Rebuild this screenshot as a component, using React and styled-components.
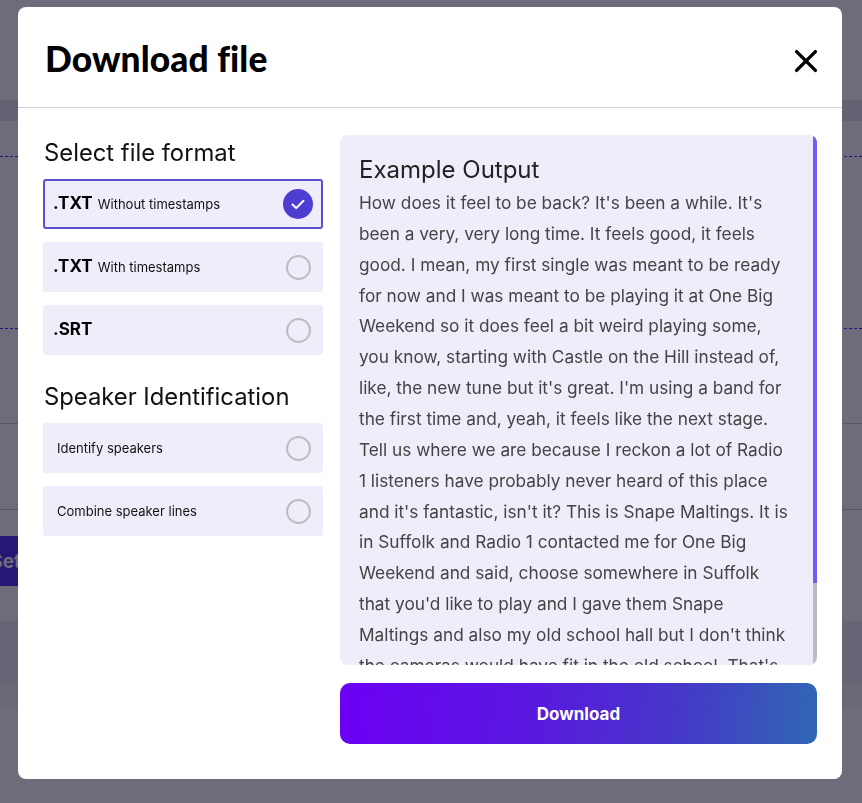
import styled, { createGlobalStyle } from "styled-components";
import { useState } from "react";

const GlobalStyle = createGlobalStyle`
  html, body {
    margin: 0;
    padding: 0;
  }
  body {
    font-family: Inter, "Noto Sans", sans-serif;
    background: #ffffff;
    overflow: hidden;
  }
`;

const transcriptLines = [
  "How does it feel to be back? It's been a while. It's",
  "been a very, very long time. It feels good, it feels",
  "good. I mean, my first single was meant to be ready",
  "for now and I was meant to be playing it at One Big",
  "Weekend so it does feel a bit weird playing some,",
  "you know, starting with Castle on the Hill instead of,",
  "like, the new tune but it's great. I'm using a band for",
  "the first time and, yeah, it feels like the next stage.",
  "Tell us where we are because I reckon a lot of Radio",
  "1 listeners have probably never heard of this place",
  "and it's fantastic, isn't it? This is Snape Maltings. It is",
  "in Suffolk and Radio 1 contacted me for One Big",
  "Weekend and said, choose somewhere in Suffolk",
  "that you'd like to play and I gave them Snape",
  "Maltings and also my old school hall but I don't think",
  "the cameras would have fit in the old school. That's",
  "why we ended up here, and it's a really special place",
  "for me, so it's great to be back home playing again.",
];

const formats = [
  { id: "txt", ext: ".TXT", note: "Without timestamps" },
  { id: "txt-ts", ext: ".TXT", note: "With timestamps" },
  { id: "srt", ext: ".SRT", note: "" },
];

const speakerOptions = [
  { id: "identify", label: "Identify speakers" },
  { id: "combine", label: "Combine speaker lines" },
];

const CheckIcon = () => (
  <svg width="30" height="30" viewBox="0 0 30 30">
    <circle cx="15" cy="15" r="15" fill="#4d3dd0" />
    <path
      d="M9.5 15.5l3.7 3.6 7.3-7.4"
      fill="none"
      stroke="#fff"
      strokeWidth="2"
      strokeLinecap="round"
      strokeLinejoin="round"
    />
  </svg>
);

const CloseIcon = () => (
  <svg width="24" height="24" viewBox="0 0 24 24">
    <path
      d="M2.6 2.6l18.8 18.8M21.4 2.6L2.6 21.4"
      stroke="#000"
      strokeWidth="3.4"
      strokeLinecap="round"
    />
  </svg>
);

const App = () => {
  const [format, setFormat] = useState("txt");
  const [speakers, setSpeakers] = useState({ identify: false, combine: false });

  const toggleSpeaker = (id) => {
    setSpeakers({ ...speakers, [id]: !speakers[id] });
  };

  return (
    <>
      <GlobalStyle />
      {/* the page that sits behind the dialog */}
      <BehindPage>
        <BehindBand $h={100} />
        <BehindBand $h={21} $bg="#e6e6ea" />
        <BehindBand $h={35} />
        <BehindLine $dashed />
        <BehindBand $h={171} />
        <BehindLine $dashed />
        <BehindBand $h={94} />
        <BehindLine $color="#c9c9d0" />
        <BehindBand $h={85} />
        <BehindLine $color="#c9c9d0" />
        <BehindBand $h={26} />
        <BehindButton>Set</BehindButton>
        <BehindBand $h={35} />
        <BehindBand $h={62} $bg="#ececef" />
        <BehindBand $h={25} $bg="#f7f7f8" />
      </BehindPage>

      <Overlay>
        <Modal>
          <Header>
            <Title>Download file</Title>
            <CloseButton aria-label="Close">
              <CloseIcon />
            </CloseButton>
          </Header>

          <Body>
            <LeftColumn>
              <SectionTitle>Select file format</SectionTitle>
              <OptionList>
                {formats.map((f) => (
                  <Option
                    key={f.id}
                    $selected={format === f.id}
                    onClick={() => setFormat(f.id)}
                  >
                    <Label>
                      <Ext>{f.ext}</Ext>
                      {f.note && <Note>{f.note}</Note>}
                    </Label>
                    <RadioSlot>
                      {format === f.id ? <CheckIcon /> : <EmptyRadio />}
                    </RadioSlot>
                  </Option>
                ))}
              </OptionList>

              <SectionTitle $spaced>Speaker Identification</SectionTitle>
              <OptionList>
                {speakerOptions.map((s) => (
                  <Option
                    key={s.id}
                    $selected={false}
                    $padLeft={12}
                    onClick={() => toggleSpeaker(s.id)}
                  >
                    <PlainLabel>{s.label}</PlainLabel>
                    <RadioSlot>
                      {speakers[s.id] ? <CheckIcon /> : <EmptyRadio />}
                    </RadioSlot>
                  </Option>
                ))}
              </OptionList>
            </LeftColumn>

            <RightColumn>
              <Preview>
                <PreviewScroll>
                  <PreviewTitle>Example Output</PreviewTitle>
                  <PreviewText>
                    {transcriptLines.map((line, i) => (
                      <span key={i}>
                        {line}
                        <br />
                      </span>
                    ))}
                  </PreviewText>
                </PreviewScroll>
                <ScrollTrack>
                  <ScrollThumb $h={448} />
                </ScrollTrack>
              </Preview>
              <DownloadButton>Download</DownloadButton>
            </RightColumn>
          </Body>
        </Modal>
      </Overlay>
    </>
  );
};

const BehindPage = styled.div`
  height: 803px;
  display: flex;
  flex-direction: column;
  overflow: hidden;
`;

const BehindBand = styled.div`
  height: ${(p) => p.$h}px;
  background: ${(p) => p.$bg || "#ffffff"};
`;

const BehindLine = styled.div`
  height: 0;
  border-top: 1px ${(p) => (p.$dashed ? "dashed" : "solid")}
    ${(p) => p.$color || "#4b2af0"};
`;

const BehindButton = styled.div`
  width: 45px;
  height: 50px;
  margin-left: -24px;
  background: #4b2af0;
  color: #ffffff;
  font-size: 19px;
  font-weight: 700;
  display: flex;
  align-items: center;
  justify-content: flex-end;
`;

const Overlay = styled.div`
  position: fixed;
  inset: 0;
  background: rgba(13, 10, 35, 0.6);
  display: flex;
  justify-content: flex-start;
  align-items: flex-start;
  padding: 7px 0 0 18px;
`;

const Modal = styled.div`
  width: 824px;
  height: 772px;
  background: #ffffff;
  border-radius: 8px;
  display: flex;
  flex-direction: column;
  box-sizing: border-box;
`;

const Header = styled.header`
  height: 101px;
  box-sizing: border-box;
  border-bottom: 1px solid #d3d1dc;
  display: flex;
  align-items: center;
  justify-content: space-between;
  padding: 0 24px 0 27px;
`;

const Title = styled.h1`
  margin: 0;
  font-family: Lato, "Noto Sans", sans-serif;
  font-weight: 900;
  font-size: 35.3px;
  color: #000000;
  letter-spacing: 0.1px;
  padding-top: 2px;
`;

const CloseButton = styled.button`
  border: none;
  background: none;
  padding: 0;
  margin-top: 8px;
  display: flex;
  cursor: pointer;
`;

const Body = styled.div`
  display: grid;
  grid-template-columns: 280px 477px;
  column-gap: 17px;
  padding: 27px 25px 35px;
`;

const LeftColumn = styled.div`
  display: flex;
  flex-direction: column;
`;

const SectionTitle = styled.h2`
  margin: ${(p) => (p.$spaced ? "24px" : "0")} 0 8px;
  font-size: 23.8px;
  font-weight: 400;
  line-height: 36px;
  color: #111111;
  padding-left: 1px;
`;

const OptionList = styled.div`
  display: flex;
  flex-direction: column;
  gap: 13px;
`;

const Option = styled.div`
  height: 50px;
  box-sizing: border-box;
  display: flex;
  align-items: center;
  justify-content: space-between;
  background: #efedf9;
  border: 2px solid ${(p) => (p.$selected ? "#5a4fd3" : "transparent")};
  border-radius: 3px;
  padding: 0 8px 0 ${(p) => p.$padLeft || 8}px;
  cursor: pointer;
`;

const Label = styled.div`
  display: flex;
  align-items: baseline;
  color: #000000;
  margin-top: -3px;
`;

const Ext = styled.span`
  font-size: 17px;
  font-weight: 700;
`;

const Note = styled.span`
  font-size: 13px;
  margin-left: 5px;
  color: #111111;
`;

const PlainLabel = styled.span`
  font-size: 13px;
  color: #111111;
`;

const RadioSlot = styled.div`
  width: 30px;
  height: 30px;
  display: flex;
  align-items: center;
  justify-content: center;
`;

const EmptyRadio = styled.span`
  width: 25px;
  height: 25px;
  box-sizing: border-box;
  border: 2px solid #bdbdbd;
  border-radius: 50%;
`;

const RightColumn = styled.div`
  display: flex;
  flex-direction: column;
  gap: 18px;
`;

const Preview = styled.div`
  height: 530px;
  display: flex;
  background: #efedf9;
  border-radius: 8px;
  overflow: hidden;
`;

const PreviewScroll = styled.div`
  flex: 1;
  min-width: 0;
  padding: 0 15px 19px 19px;
  overflow: hidden;
`;

const ScrollTrack = styled.div`
  width: 4px;
  flex-shrink: 0;
  background: #bdbdbd;
`;

const ScrollThumb = styled.div`
  height: ${(p) => p.$h}px;
  background: #6b5ef5;
`;

const PreviewTitle = styled.h3`
  margin: 21px 0 4px;
  font-size: 24px;
  font-weight: 400;
  line-height: 28px;
  color: #222222;
`;

const PreviewText = styled.p`
  margin: 0;
  font-size: 17.25px;
  line-height: 30.86px;
  color: #444444;
  white-space: nowrap;
`;

const DownloadButton = styled.button`
  height: 61px;
  border: none;
  border-radius: 10px;
  background: linear-gradient(95deg, #6c00f5 0%, #5a18e0 40%, #4637c8 70%, #3067b4 100%);
  color: #ffffff;
  font-family: Inter, "Noto Sans", sans-serif;
  font-size: 17px;
  font-weight: 700;
  cursor: pointer;
`;

export default App;
